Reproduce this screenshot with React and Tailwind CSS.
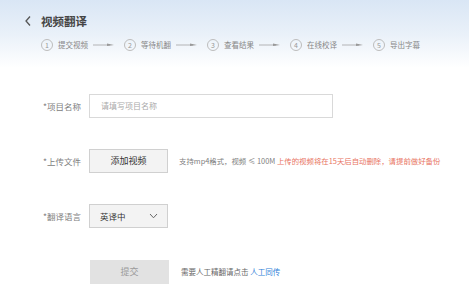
import React from "react";

const font = { fontFamily: '"Noto Sans CJK SC", "Noto Sans", sans-serif' };

function Circle({ n }) {
  return (
    <span className="flex h-[12px] w-[12px] items-center justify-center rounded-full border border-[#bdbdbd] text-[7px] leading-none text-[#999]">
      {n}
    </span>
  );
}

function Arrow() {
  return (
    <svg width="21" height="6" viewBox="0 0 21 6" className="mx-[5px]">
      <line x1="0" y1="3" x2="17" y2="3" stroke="#999" strokeWidth="0.7" />
      <path d="M14 1.6 L21 3 L14 4 Z" fill="#999" />
    </svg>
  );
}

export default function App() {
  const steps = ["提交视频", "等待机翻", "查看结果", "在线校译", "导出字幕"];
  return (
    <div
      className="flex h-[292px] w-[469px] flex-col bg-[linear-gradient(180deg,#d9e6f5_0px,#eaf1f9_35px,#ffffff_68px)]"
      style={font}
    >
      <div className="flex items-center pl-[24px] pt-[14px]">
        <svg width="8" height="12" viewBox="0 0 8 12">
          <path d="M6 1.5 L2 6 L6 10.5" fill="none" stroke="#555" strokeWidth="1.3" />
        </svg>
        <span className="ml-[9px] text-[11.5px] font-semibold leading-[14px] text-[#444]">视频翻译</span>
      </div>
      <div className="mt-[11px] flex items-center pl-[41px]">
        {steps.map((s, i) => (
          <React.Fragment key={s}>
            <Circle n={i + 1} />
            <span className="ml-[5px] w-[30px] text-[7.5px] leading-[10px] text-[#888]">{s}</span>
            {i < steps.length - 1 && (
              <>
                <Arrow />
                <span className="w-[5px]" />
              </>
            )}
          </React.Fragment>
        ))}
      </div>

      <div className="mt-[43px] flex flex-col gap-[31px] text-[8.5px] text-[#808080]">
        <div className="flex items-center">
          <span className="w-[81px] text-right">*项目名称</span>
          <div className="ml-[8px] flex h-[24px] w-[244px] items-center border border-[#d9d9d9] bg-white pl-[11px] text-[8px] text-[#aaa]">
            请填写项目名称
          </div>
        </div>
        <div className="flex items-center">
          <span className="w-[81px] text-right">*上传文件</span>
          <div className="ml-[8px] flex h-[24px] w-[79px] items-center justify-center border border-[#d0d0d0] bg-[#f3f3f3] text-[9px] text-[#333]">
            添加视频
          </div>
          <span className="ml-[11px] text-[7.4px] text-[#808080]">
            支持mp4格式，视频 ≤ 100M <span className="text-[#e8735f]">上传的视频将在15天后自动删除，请提前做好备份</span>
          </span>
        </div>
        <div className="flex items-center">
          <span className="w-[81px] text-right">*翻译语言</span>
          <div className="ml-[8px] flex h-[24px] w-[79px] items-center justify-between border border-[#d0d0d0] bg-[#f3f3f3] pl-[10px] pr-[9px] text-[8.5px] text-[#333]">
            <span>英译中</span>
            <svg width="9" height="6" viewBox="0 0 9 6">
              <path d="M1 1 L4.5 4.8 L8 1" fill="none" stroke="#666" strokeWidth="1" />
            </svg>
          </div>
        </div>
        <div className="mt-[1px] flex items-center">
          <div className="ml-[90px] flex h-[24px] w-[79px] items-center justify-center bg-[#e2e2e2] text-[9px] text-[#9a9a9a]">
            提交
          </div>
          <span className="ml-[12px] text-[7.5px] text-[#666]">
            需要人工精翻请点击 <span className="text-[#2f7fd8]">人工同传</span>
          </span>
        </div>
      </div>
    </div>
  );
}
